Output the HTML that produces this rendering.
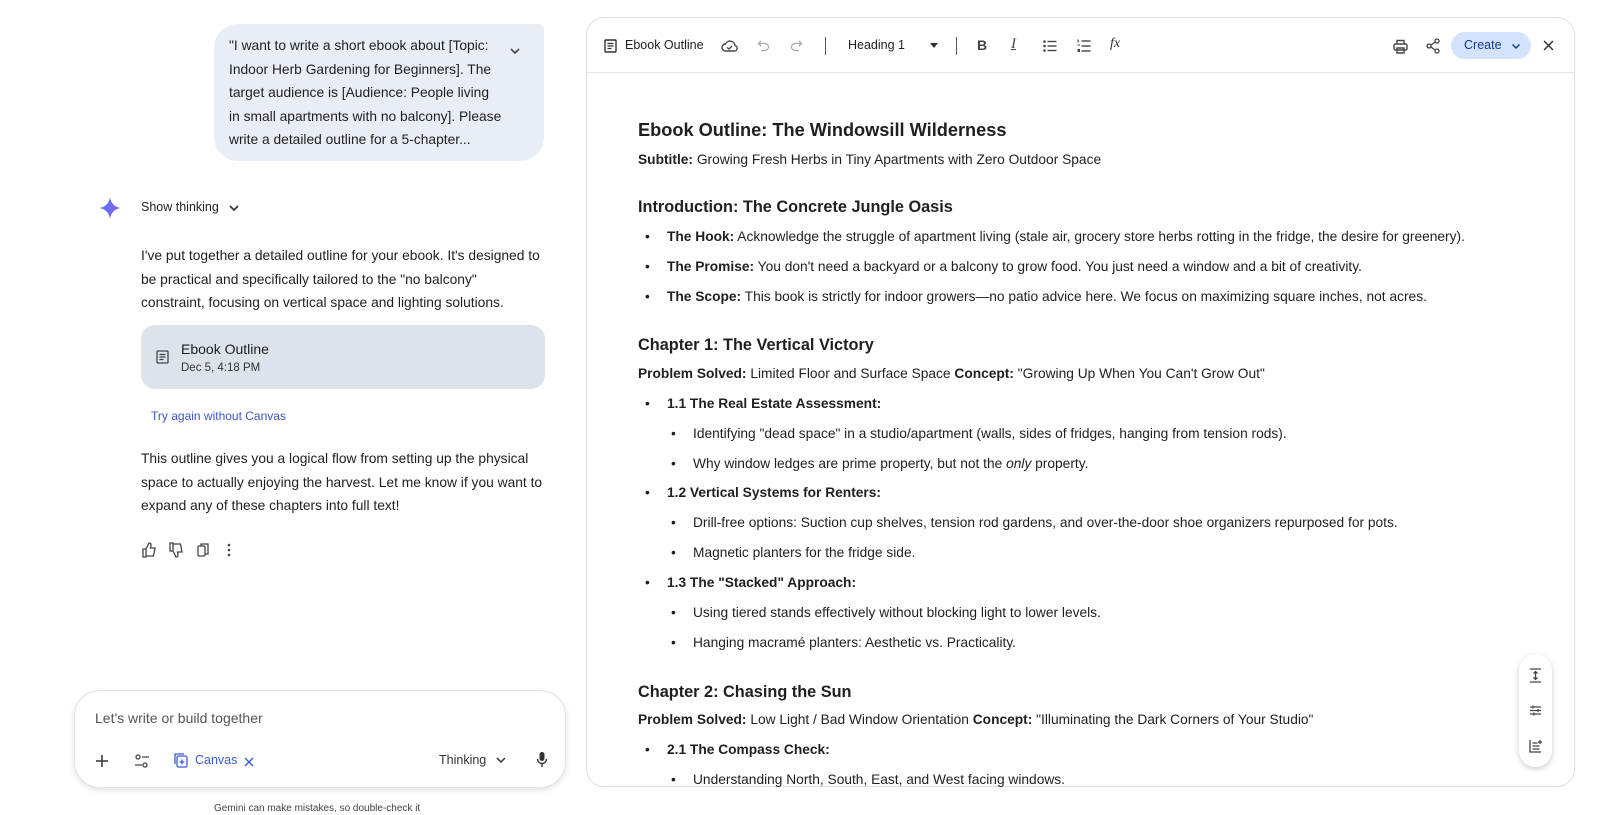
<!DOCTYPE html>
<html><head><meta charset="utf-8"><style>
*{margin:0;padding:0;box-sizing:border-box}
body{width:1620px;height:815px;overflow:hidden;background:#fff;font-family:"Liberation Sans",sans-serif;color:#1f1f1f;position:relative}
.a{position:absolute;white-space:nowrap}
.t{font-size:13.75px;line-height:24px}
.l{font-size:13.8px}
svg{display:block}
.ic{position:absolute}
b{font-weight:bold}
.w{position:absolute;left:-7px;top:0;width:1620px;height:815px}
</style></head><body>

<!-- user bubble -->
<div class="a" style="left:214px;top:24px;width:330px;height:137px;background:#e9edf6;border-radius:24px 6px 24px 24px"></div>
<div class="a l" style="left:229px;top:34px;line-height:23.5px">"I want to write a short ebook about [Topic:<br>Indoor Herb Gardening for Beginners]. The<br>target audience is [Audience: People living<br>in small apartments with no balcony]. Please<br>write a detailed outline for a 5-chapter...</div>
<svg class="ic" style="left:508px;top:44px" width="14" height="14" viewBox="0 0 14 14"><path d="M3 5l4 4 4-4" stroke="#444" stroke-width="1.6" fill="none"/></svg>

<!-- sparkle -->
<svg class="ic" style="left:99px;top:197px" width="22" height="22" viewBox="0 0 20 20"><defs><linearGradient id="g" x1="0" y1="0" x2="1" y2="1"><stop offset="0" stop-color="#4f7cf5"/><stop offset="1" stop-color="#8d5cf0"/></linearGradient></defs><path d="M10 0C10.6 5.5 14.5 9.4 20 10 14.5 10.6 10.6 14.5 10 20 9.4 14.5 5.5 10.6 0 10 5.5 9.4 9.4 5.5 10 0Z" fill="url(#g)"/></svg>
<div class="a" style="left:141px;top:200px;font-size:12.5px">Show thinking</div>
<svg class="ic" style="left:227px;top:203px" width="14" height="12" viewBox="0 0 14 12"><path d="M3 3l4 4 4-4" stroke="#333" stroke-width="1.7" fill="none"/></svg>

<div class="a l" style="left:141px;top:244px;line-height:23.5px">I've put together a detailed outline for your ebook. It's designed to<br>be practical and specifically tailored to the "no balcony"<br>constraint, focusing on vertical space and lighting solutions.</div>

<!-- card -->
<div class="a" style="left:141px;top:325px;width:404px;height:64px;background:#dde3ea;border-radius:14px"></div>
<svg class="ic" style="left:156px;top:350px" width="13" height="14" viewBox="0 0 13 14"><rect x="1" y="1" width="11" height="12" rx="1" stroke="#444" stroke-width="1.3" fill="none"/><path d="M3.5 4.5h6M3.5 7h6M3.5 9.5h4" stroke="#444" stroke-width="1.2"/></svg>
<div class="a" style="left:181px;top:341px;font-size:14px">Ebook Outline</div>
<div class="a" style="left:181px;top:362px;font-size:11.5px;color:#333">Dec 5, 4:18 PM</div>

<div class="a" style="left:151px;top:409px;font-size:12px;color:#3b57c4">Try again without Canvas</div>

<div class="a l" style="left:141px;top:447px;line-height:23.5px">This outline gives you a logical flow from setting up the physical<br>space to actually enjoying the harvest. Let me know if you want to<br>expand any of these chapters into full text!</div>

<!-- feedback icons -->
<svg class="ic" style="left:141px;top:542px" width="100" height="16" viewBox="0 0 100 16"><g stroke="#444" stroke-width="1.3" fill="none"><path d="M2 7h3v8H2zM5 7l3-6c1.5 0 2 1 2 2l-.5 3H14l-1.5 8H5"/><path d="M29 9h3V1h-3zM32 9l3 6c1.5 0 2-1 2-2l-.5-3H41l-1.5-8H32"/><rect x="57" y="4" width="7" height="10" rx="1"/><path d="M60 4V2h7v10h-3"/></g><g fill="#444"><circle cx="88" cy="3" r="1.3"/><circle cx="88" cy="8" r="1.3"/><circle cx="88" cy="13" r="1.3"/></g></svg>

<!-- input box -->
<div class="a" style="left:74px;top:690px;width:492px;height:98px;border:1px solid #e2e2e2;border-radius:26px;box-shadow:0 2px 6px rgba(0,0,0,.12);background:#fff"></div>
<div class="a" style="left:95px;top:710px;font-size:14px;color:#555">Let's write or build together</div>
<svg class="ic" style="left:95px;top:754px" width="14" height="14" viewBox="0 0 14 14"><path d="M7 1v12M1 7h12" stroke="#333" stroke-width="1.5"/></svg>
<svg class="ic" style="left:134px;top:754px" width="16" height="14" viewBox="0 0 16 14"><g stroke="#444" stroke-width="1.3" fill="none"><circle cx="4" cy="3" r="2"/><circle cx="11" cy="11" r="2"/><path d="M8 3h7M1 11h7"/></g></svg>
<svg class="ic" style="left:174px;top:753px" width="15" height="15" viewBox="0 0 15 15"><g stroke="#3b5bdb" stroke-width="1.3" fill="none"><rect x="3" y="3" width="10" height="11" rx="1.5"/><path d="M1 11V1h9"/><path d="M8 6.5v5M5.5 9h5"/></g></svg>
<div class="a" style="left:195px;top:753px;font-size:12.5px;color:#3b5bdb">Canvas</div>
<svg class="ic" style="left:244px;top:757px" width="10" height="10" viewBox="0 0 10 10"><path d="M1 1l8 8M9 1L1 9" stroke="#3b5bdb" stroke-width="1.4"/></svg>
<div class="a" style="left:439px;top:753px;font-size:12.5px;color:#333">Thinking</div>
<svg class="ic" style="left:495px;top:755px" width="12" height="10" viewBox="0 0 12 10"><path d="M2 3l4 4 4-4" stroke="#333" stroke-width="1.5" fill="none"/></svg>
<svg class="ic" style="left:536px;top:751px" width="12" height="17" viewBox="0 0 12 17"><rect x="3.5" y="1" width="5" height="9" rx="2.5" fill="#333"/><path d="M1.5 8a4.5 4.5 0 009 0M6 12.5V16" stroke="#333" stroke-width="1.4" fill="none"/></svg>
<div class="a" style="left:214px;top:803px;font-size:10px;color:#444">Gemini can make mistakes, so double-check it</div>

<div class="w">
<!-- right panel -->
<div class="a" style="left:593px;top:17px;width:989px;height:770px;border:1px solid #e0e0e0;border-radius:18px;background:#fff"></div>
<div class="a" style="left:594px;top:72px;width:987px;height:1px;background:#e4e4e4"></div>

<svg class="ic" style="left:611px;top:39px" width="13" height="14" viewBox="0 0 13 14"><rect x="1" y="1" width="11" height="12" rx="1" stroke="#333" stroke-width="1.4" fill="none"/><path d="M3.5 4.5h6M3.5 7h6M3.5 9.5h4" stroke="#333" stroke-width="1.2"/></svg>
<div class="a" style="left:632px;top:38px;font-size:12.5px">Ebook Outline</div>
<svg class="ic" style="left:728px;top:39px" width="17" height="13" viewBox="0 0 17 13"><path d="M4.5 12a3.5 3.5 0 010-7 5 5 0 019.5 1.5A2.8 2.8 0 0113 12z" stroke="#444" stroke-width="1.4" fill="none"/><path d="M6 8.5l2 1.5 3-3" stroke="#444" stroke-width="1.3" fill="none"/></svg>
<svg class="ic" style="left:764px;top:40px" width="14" height="12" viewBox="0 0 14 12"><path d="M4 1L1.5 3.5 4 6M1.5 3.5H8a3.5 3.5 0 010 7H4" stroke="#aaa" stroke-width="1.3" fill="none"/></svg>
<svg class="ic" style="left:796px;top:40px" width="14" height="12" viewBox="0 0 14 12"><path d="M10 1l2.5 2.5L10 6M12.5 3.5H6a3.5 3.5 0 000 7h4" stroke="#aaa" stroke-width="1.3" fill="none"/></svg>
<div class="a" style="left:832px;top:37px;width:1px;height:18px;background:#555"></div>
<div class="a" style="left:855px;top:38px;font-size:12.5px">Heading 1</div>
<svg class="ic" style="left:937px;top:43px" width="8" height="5" viewBox="0 0 8 5"><path d="M0 0h8L4 5z" fill="#333"/></svg>
<div class="a" style="left:963px;top:37px;width:1px;height:18px;background:#555"></div>
<div class="a" style="left:984px;top:37px;font-size:14px;font-weight:bold;color:#444">B</div>
<div class="a" style="left:1018px;top:36px;font-size:15px;font-style:italic;font-family:'Liberation Serif',serif;color:#444;text-decoration:underline;text-decoration-thickness:1px">I</div>
<svg class="ic" style="left:1050px;top:40px" width="14" height="12" viewBox="0 0 14 12"><g fill="#444"><circle cx="1.5" cy="1.5" r="1.3"/><circle cx="1.5" cy="6" r="1.3"/><circle cx="1.5" cy="10.5" r="1.3"/><rect x="4.5" y="0.8" width="9" height="1.4"/><rect x="4.5" y="5.3" width="9" height="1.4"/><rect x="4.5" y="9.8" width="9" height="1.4"/></g></svg>
<svg class="ic" style="left:1084px;top:39px" width="14" height="14" viewBox="0 0 14 14"><g fill="#444"><rect x="0.5" y="0.5" width="1.2" height="3"/><rect x="0.5" y="5.5" width="2.5" height="1"/><rect x="0.5" y="10" width="2.5" height="3"/><rect x="4.5" y="1.3" width="9" height="1.4"/><rect x="4.5" y="6.3" width="9" height="1.4"/><rect x="4.5" y="11.3" width="9" height="1.4"/></g></svg>
<div class="a" style="left:1117px;top:36px;font-size:14px;font-style:italic;font-family:'Liberation Serif',serif;color:#333">fx</div>

<svg class="ic" style="left:1400px;top:39px" width="15" height="15" viewBox="0 0 15 15"><g stroke="#444" stroke-width="1.4" fill="none"><path d="M4 5V1.5h7V5"/><rect x="1" y="5" width="13" height="6" rx="1.5"/><path d="M4 9h7v5H4z"/></g></svg>
<svg class="ic" style="left:1433px;top:38px" width="14" height="16" viewBox="0 0 14 16"><g stroke="#444" stroke-width="1.3" fill="none"><circle cx="11" cy="3" r="2"/><circle cx="3" cy="8" r="2"/><circle cx="11" cy="13" r="2"/><path d="M5 7l4-3M5 9l4 3"/></g></svg>
<div class="a" style="left:1458px;top:32px;width:80px;height:27px;background:#d3e3fd;border-radius:14px"></div>
<div class="a" style="left:1471px;top:38px;font-size:12.5px;color:#0b3a8f">Create</div>
<svg class="ic" style="left:1518px;top:43px" width="10" height="7" viewBox="0 0 10 7"><path d="M1.5 1.5L5 5l3.5-3.5" stroke="#0b3a8f" stroke-width="1.4" fill="none"/></svg>
<svg class="ic" style="left:1550px;top:40px" width="11" height="11" viewBox="0 0 11 11"><path d="M1 1l9 9M10 1L1 10" stroke="#333" stroke-width="1.5"/></svg>

<!-- document -->
<div class="a" style="left:645px;top:120px;font-size:18.2px;font-weight:bold">Ebook Outline: The Windowsill Wilderness</div>
<div class="a t" style="left:645px;top:148px"><b>Subtitle:</b> Growing Fresh Herbs in Tiny Apartments with Zero Outdoor Space</div>
<div class="a" style="left:645px;top:198px;font-size:16.3px;font-weight:bold">Introduction: The Concrete Jungle Oasis</div>
<div class="a t" style="left:652px;top:225px">•</div><div class="a t" style="left:674px;top:225px"><b>The Hook:</b> Acknowledge the struggle of apartment living (stale air, grocery store herbs rotting in the fridge, the desire for greenery).</div>
<div class="a t" style="left:652px;top:255px">•</div><div class="a t" style="left:674px;top:255px"><b>The Promise:</b> You don't need a backyard or a balcony to grow food. You just need a window and a bit of creativity.</div>
<div class="a t" style="left:652px;top:285px">•</div><div class="a t" style="left:674px;top:285px"><b>The Scope:</b> This book is strictly for indoor growers—no patio advice here. We focus on maximizing square inches, not acres.</div>
<div class="a" style="left:645px;top:336px;font-size:16.3px;font-weight:bold">Chapter 1: The Vertical Victory</div>
<div class="a t" style="left:645px;top:362px"><b>Problem Solved:</b> Limited Floor and Surface Space <b>Concept:</b> "Growing Up When You Can't Grow Out"</div>
<div class="a t" style="left:652px;top:392px">•</div><div class="a t" style="left:674px;top:392px"><b>1.1 The Real Estate Assessment:</b></div>
<div class="a t" style="left:678px;top:422px">•</div><div class="a t" style="left:700px;top:422px">Identifying "dead space" in a studio/apartment (walls, sides of fridges, hanging from tension rods).</div>
<div class="a t" style="left:678px;top:452px">•</div><div class="a t" style="left:700px;top:452px">Why window ledges are prime property, but not the <i>only</i> property.</div>
<div class="a t" style="left:652px;top:481px">•</div><div class="a t" style="left:674px;top:481px"><b>1.2 Vertical Systems for Renters:</b></div>
<div class="a t" style="left:678px;top:511px">•</div><div class="a t" style="left:700px;top:511px">Drill-free options: Suction cup shelves, tension rod gardens, and over-the-door shoe organizers repurposed for pots.</div>
<div class="a t" style="left:678px;top:541px">•</div><div class="a t" style="left:700px;top:541px">Magnetic planters for the fridge side.</div>
<div class="a t" style="left:652px;top:571px">•</div><div class="a t" style="left:674px;top:571px"><b>1.3 The "Stacked" Approach:</b></div>
<div class="a t" style="left:678px;top:601px">•</div><div class="a t" style="left:700px;top:601px">Using tiered stands effectively without blocking light to lower levels.</div>
<div class="a t" style="left:678px;top:631px">•</div><div class="a t" style="left:700px;top:631px">Hanging macramé planters: Aesthetic vs. Practicality.</div>
<div class="a" style="left:645px;top:683px;font-size:16.3px;font-weight:bold">Chapter 2: Chasing the Sun</div>
<div class="a t" style="left:645px;top:708px"><b>Problem Solved:</b> Low Light / Bad Window Orientation <b>Concept:</b> "Illuminating the Dark Corners of Your Studio"</div>
<div class="a t" style="left:652px;top:738px">•</div><div class="a t" style="left:674px;top:738px"><b>2.1 The Compass Check:</b></div>
<div class="a t" style="left:678px;top:768px">•</div><div class="a t" style="left:700px;top:768px">Understanding North, South, East, and West facing windows.</div>
<div class="a" style="left:594px;top:787px;width:987px;height:28px;background:#fff"></div>

<!-- floating tools -->
<div class="a" style="left:1526px;top:654px;width:33px;height:113px;background:#fff;border-radius:17px;box-shadow:0 2px 6px rgba(0,0,0,.2)"></div>
<svg class="ic" style="left:1536px;top:668px" width="13" height="15" viewBox="0 0 13 15"><path d="M1 1h11M1 14h11M6.5 4v7M4.5 5.5l2-2 2 2M4.5 9.5l2 2 2-2" stroke="#444" stroke-width="1.3" fill="none"/></svg>
<svg class="ic" style="left:1536px;top:704px" width="13" height="13" viewBox="0 0 13 13"><path d="M1 3h11M1 6.5h11M1 10h11M4 1.5v3M9 5v3M5 8.5v3" stroke="#444" stroke-width="1.2" fill="none"/></svg>
<svg class="ic" style="left:1536px;top:739px" width="14" height="14" viewBox="0 0 14 14"><path d="M1 1v12h11M3.5 4h5M3.5 7h7M3.5 10h7M11 1v4M9 3h4" stroke="#444" stroke-width="1.3" fill="none"/></svg>
</div>
</body></html>
